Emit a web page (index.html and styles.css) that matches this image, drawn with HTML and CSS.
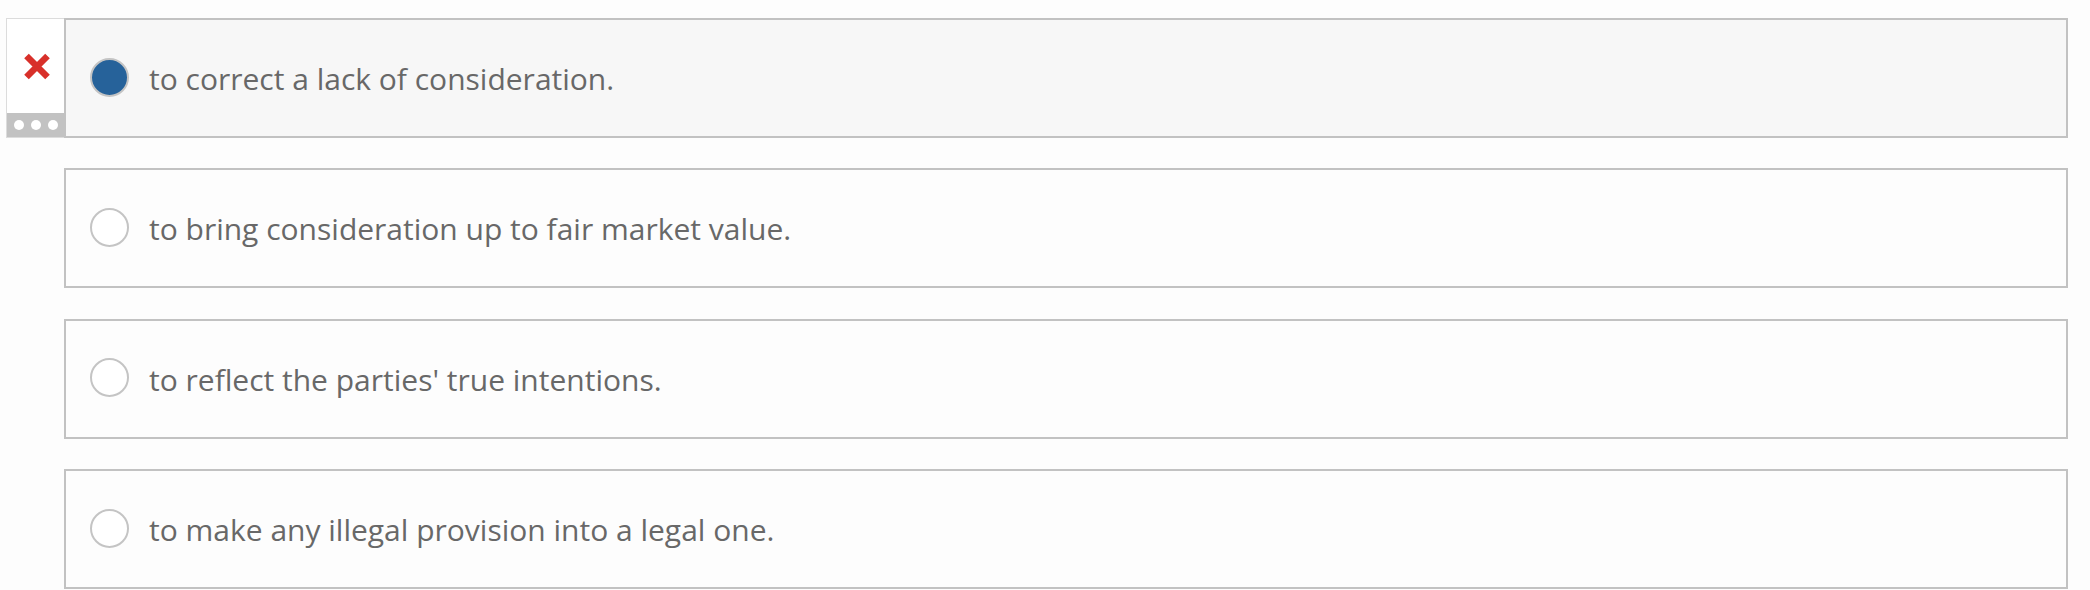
FILE: index.html
```html
<!DOCTYPE html>
<html lang="en">
<head>
<meta charset="utf-8">
<title>Answer options</title>
<link rel="stylesheet" href="styles.css">
</head>
<body>
<div class="question">
  <div class="row">
    <div class="marker">
      <div class="marker-icon">
        <svg width="28" height="27" viewBox="0 0 28 27" aria-hidden="true">
          <path d="M3.5 3 L24.5 24 M24.5 3 L3.5 24" stroke="#d8302a" stroke-width="6.5" stroke-linecap="butt" fill="none"/>
        </svg>
      </div>
      <div class="marker-more"><span></span><span></span><span></span></div>
    </div>
    <label class="option selected">
      <span class="radio checked"></span>
      <span class="text">to correct a lack of consideration.</span>
    </label>
  </div>
  <div class="row">
    <div class="spacer"></div>
    <label class="option">
      <span class="radio"></span>
      <span class="text">to bring consideration up to fair market value.</span>
    </label>
  </div>
  <div class="row">
    <div class="spacer"></div>
    <label class="option">
      <span class="radio"></span>
      <span class="text">to reflect the parties' true intentions.</span>
    </label>
  </div>
  <div class="row">
    <div class="spacer"></div>
    <label class="option">
      <span class="radio"></span>
      <span class="text">to make any illegal provision into a legal one.</span>
    </label>
  </div>
</div>
</body>
</html>
```

FILE: styles.css
```css
html, body {
  margin: 0;
  padding: 0;
  background: #fdfdfd;
}

.question {
  padding: 18px 22px 0 6px;
  display: flex;
  flex-direction: column;
  gap: 30.4px;
}

.row {
  display: grid;
  grid-template-columns: 58px 1fr;
  height: 120px;
}

.marker {
  box-sizing: border-box;
  border: 1px solid #dcdcdc;
  border-right: none;
  background: #ffffff;
  display: flex;
  flex-direction: column;
}

.marker-icon {
  flex: 1;
  display: flex;
  align-items: center;
  justify-content: center;
  padding-top: 1px;
  padding-left: 2px;
}

.marker-icon svg {
  display: block;
}

.marker-more {
  height: 24px;
  background: #c2c2c2;
  display: flex;
  align-items: center;
  justify-content: center;
  gap: 7px;
  padding-left: 1px;
}

.marker-more span {
  width: 10px;
  height: 10px;
  border-radius: 50%;
  background: #ffffff;
}

.option {
  box-sizing: border-box;
  border: 2px solid #c2c2c2;
  background: #fdfdfd;
  display: flex;
  align-items: center;
  padding-left: 24px;
  gap: 20px;
}

.option.selected {
  background: #f7f7f7;
}

.radio {
  box-sizing: border-box;
  width: 39px;
  height: 39px;
  border-radius: 50%;
  border: 2px solid #c4c4c4;
  background: #ffffff;
  flex: none;
  margin-top: -2px;
}

.radio.checked {
  background: #26629a;
  border-color: #c4c4c4;
}

.text {
  font-family: "Open Sans", "Liberation Sans", sans-serif;
  font-size: 30px;
  color: #686868;
  line-height: 1.2;
  padding-top: 2px;
}
```
